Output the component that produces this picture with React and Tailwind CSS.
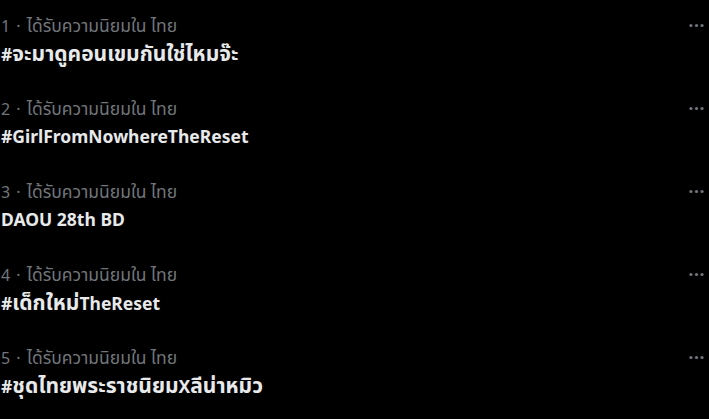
const trends = [
  { rank: 1, name: '#จะมาดูคอนเขมกันใช่ไหมจ๊ะ' },
  { rank: 2, name: '#GirlFromNowhereTheReset' },
  { rank: 3, name: 'DAOU 28th BD' },
  { rank: 4, name: '#เด็กใหม่TheReset' },
  { rank: 5, name: '#ชุดไทยพระราชนิยมXลีน่าหมิว' },
];

// split a label into Thai / non-Thai runs so the Thai glyphs can be sized apart
const splitThai = (text) => text.match(/[\u0E00-\u0E7F]+|[^\u0E00-\u0E7F]+/g) || [];

const Label = ({ text, thaiClass }) =>
  splitThai(text).map((part, i) =>
    /[\u0E00-\u0E7F]/.test(part) ? (
      <span key={i} className={thaiClass}>
        {part}
      </span>
    ) : (
      <span key={i}>{part}</span>
    )
  );

const MoreIcon = () => (
  <svg viewBox="0 0 24 24" className="w-[19px] h-[19px] fill-[#71767b]">
    <circle cx="5" cy="12" r="2" />
    <circle cx="12" cy="12" r="2" />
    <circle cx="19" cy="12" r="2" />
  </svg>
);

const App = () => {
  return (
    <div
      className="w-[709px] h-[419px] bg-black overflow-hidden"
      style={{ fontFamily: '"Segoe UI", "Noto Sans", "Noto Sans Thai", "Liberation Sans", sans-serif' }}
    >
      {trends.map((t) => (
        <div key={t.rank} className="h-[83px] pt-[15px] pl-[1px] pr-[3px] flex justify-between">
          <div className="flex flex-col">
            <span className="text-[16px] leading-5 text-[#71767b] whitespace-nowrap">
              {t.rank} <span className="mx-[2px]">·</span>{' '}
              <Label text="ได้รับความนิยมใน ไทย" thaiClass="text-[17.5px]" />
            </span>
            <span className="mt-[5px] text-[17.5px] leading-6 font-bold text-[#e7e9ea] whitespace-nowrap">
              <Label text={t.name} thaiClass="text-[21px]" />
            </span>
          </div>
          <div className="h-5 flex items-center">
            <MoreIcon />
          </div>
        </div>
      ))}
    </div>
  );
};

export default App;
